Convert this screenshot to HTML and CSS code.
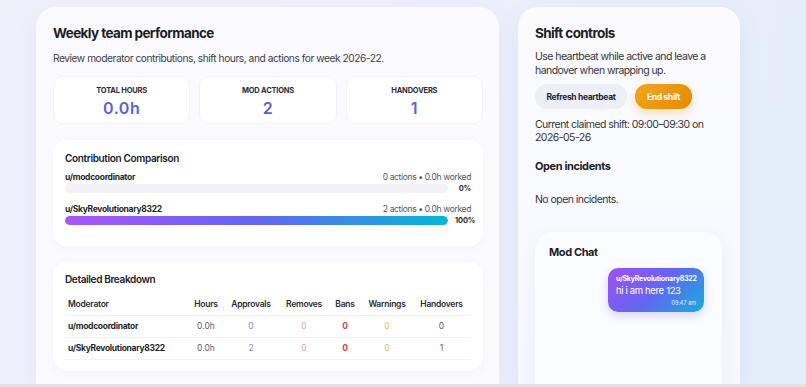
FILE: index.html
```html
<!DOCTYPE html>
<html lang="en">
<head>
    <meta charset="UTF-8">
    <meta name="viewport" content="width=device-width, initial-scale=1.0">
    <title>Weekly team performance</title>
    <link rel="stylesheet" href="styles.css">
</head>
<body>
    <div class="page">
        <div class="panel main-panel">
            <h1>Weekly team performance</h1>
            <p class="subtitle">Review moderator contributions, shift hours, and actions for week 2026-22.</p>

            <div class="stats">
                <div class="stat">
                    <div class="stat-label">TOTAL HOURS</div>
                    <div class="stat-value">0.0h</div>
                </div>
                <div class="stat">
                    <div class="stat-label">MOD ACTIONS</div>
                    <div class="stat-value">2</div>
                </div>
                <div class="stat">
                    <div class="stat-label">HANDOVERS</div>
                    <div class="stat-value">1</div>
                </div>
            </div>

            <div class="card compare">
                <h2>Contribution Comparison</h2>
                <div class="compare-row">
                    <div class="compare-head">
                        <span class="mod-name">u/modcoordinator</span>
                        <span class="compare-meta">0 actions • 0.0h worked</span>
                    </div>
                    <div class="bar-line">
                        <div class="bar-track"><div class="bar-fill" style="width: 0%"></div></div>
                        <span class="bar-pct">0%</span>
                    </div>
                </div>
                <div class="compare-row">
                    <div class="compare-head">
                        <span class="mod-name">u/SkyRevolutionary8322</span>
                        <span class="compare-meta">2 actions • 0.0h worked</span>
                    </div>
                    <div class="bar-line">
                        <div class="bar-track"><div class="bar-fill" style="width: 100%"></div></div>
                        <span class="bar-pct">100%</span>
                    </div>
                </div>
            </div>

            <div class="card breakdown">
                <h2>Detailed Breakdown</h2>
                <table>
                    <colgroup>
                        <col class="c-mod">
                        <col class="c-hours">
                        <col class="c-appr">
                        <col class="c-rem">
                        <col class="c-bans">
                        <col class="c-warn">
                        <col class="c-hand">
                    </colgroup>
                    <thead>
                        <tr>
                            <th class="left">Moderator</th>
                            <th>Hours</th>
                            <th>Approvals</th>
                            <th>Removes</th>
                            <th>Bans</th>
                            <th>Warnings</th>
                            <th>Handovers</th>
                        </tr>
                    </thead>
                    <tbody>
                        <tr>
                            <td class="left mod-name">u/modcoordinator</td>
                            <td class="muted">0.0h</td>
                            <td class="appr">0</td>
                            <td class="rem">0</td>
                            <td class="bans">0</td>
                            <td class="warn">0</td>
                            <td class="muted">0</td>
                        </tr>
                        <tr>
                            <td class="left mod-name">u/SkyRevolutionary8322</td>
                            <td class="muted">0.0h</td>
                            <td class="appr">2</td>
                            <td class="rem">0</td>
                            <td class="bans">0</td>
                            <td class="warn">0</td>
                            <td class="muted">1</td>
                        </tr>
                    </tbody>
                </table>
            </div>
        </div>

        <div class="panel side-panel">
            <h1>Shift controls</h1>
            <p class="side-text">Use heartbeat while active and leave a handover when wrapping up.</p>
            <div class="actions">
                <button class="btn btn-soft">Refresh heartbeat</button>
                <button class="btn btn-orange">End shift</button>
            </div>
            <p class="side-text claimed">Current claimed shift: 09:00–09:30 on 2026-05-26</p>

            <h3>Open incidents</h3>
            <p class="side-text empty">No open incidents.</p>

            <div class="chat">
                <h3>Mod Chat</h3>
                <div class="bubble">
                    <div class="bubble-user">u/SkyRevolutionary8322</div>
                    <div class="bubble-text">hi i am here 123</div>
                    <div class="bubble-time">09:47 am</div>
                </div>
            </div>
        </div>
    </div>
    <div class="bottom-edge"></div>
</body>
</html>
```

FILE: styles.css
```css
* {
    box-sizing: border-box;
}
body {
    margin: 0;
    height: 387px;
    overflow: hidden;
    font-family: Inter, "Noto Sans", sans-serif;
    color: #1d1d24;
    background: linear-gradient(100deg, #f0f0fb 0%, #eeeffb 55%, #e2edf9 100%);
}
.page {
    display: flex;
    gap: 19px;
    height: 384px;
    padding: 7px 0 0 36px;
    overflow: hidden;
}
.panel {
    border-radius: 20px 20px 0 0;
    box-shadow: 0 6px 24px rgba(120, 120, 200, 0.08);
}
.main-panel {
    width: 463px;
    padding: 16px 16px 0 17px;
    background: #f9f9fe;
}
.side-panel {
    width: 222px;
    padding: 16px 18px 0 17px;
    background: linear-gradient(180deg, #fbfbfe 0%, #f5f8fd 100%);
}
h1 {
    margin: 0;
    font-size: 13.5px;
    line-height: 20px;
    font-weight: 700;
    letter-spacing: -0.6px;
}
.subtitle {
    margin: 8px 0 0;
    font-size: 10.2px;
    line-height: 14px;
    color: #3e3e48;
    letter-spacing: -0.45px;
}
.stats {
    display: flex;
    gap: 9px;
    margin-top: 11px;
}
.stat {
    flex: 1;
    height: 48px;
    padding-top: 9px;
    text-align: center;
    background: #fff;
    border: 1px solid #f1f1f7;
    border-radius: 10px;
}
.stat-label {
    font-size: 7.5px;
    line-height: 10px;
    font-weight: 700;
    color: #2c2c34;
    letter-spacing: -0.2px;
}
.stat-value {
    margin-top: 2px;
    font-size: 16px;
    line-height: 20px;
    font-weight: 600;
    color: #5d5fd9;
    letter-spacing: 0.5px;
}
.card {
    background: #fff;
    border-radius: 14px;
    box-shadow: 0 2px 10px rgba(120, 120, 200, 0.05);
}
.compare {
    margin-top: 16px;
    height: 106px;
    padding: 11px 12px 0;
}
h2 {
    margin: 0;
    font-size: 10px;
    line-height: 14px;
    font-weight: 600;
    color: #202028;
    letter-spacing: -0.35px;
}
.compare-row {
    margin-top: 6px;
}
.compare-row + .compare-row {
    margin-top: 10px;
}
.compare-head {
    display: flex;
    justify-content: space-between;
    font-size: 8.5px;
    line-height: 12px;
}
.mod-name {
    font-weight: 700;
    color: #1f1f27;
    letter-spacing: -0.3px;
}
.compare-meta {
    color: #55555f;
    letter-spacing: -0.35px;
}
.bar-line {
    display: flex;
    align-items: center;
    gap: 7px;
    height: 9px;
    margin-top: 1px;
}
.bar-track {
    flex: 1;
    height: 9px;
    border-radius: 5px;
    background: #f1f1f8;
    overflow: hidden;
}
.bar-fill {
    height: 100%;
    border-radius: 5px;
    background: linear-gradient(90deg, #a855f7 0%, #6366f1 50%, #06b6d4 100%);
}
.bar-pct {
    width: 16px;
    font-size: 7.5px;
    line-height: 9px;
    font-weight: 700;
    text-align: right;
    color: #2a2a33;
    letter-spacing: -0.2px;
}
.breakdown {
    margin-top: 16px;
    height: 109px;
    padding: 10px 12px 0;
}
table {
    width: 100%;
    margin-top: 7px;
    border-collapse: collapse;
    table-layout: fixed;
    font-size: 8.5px;
}
.c-mod { width: 125px; }
.c-hours { width: 32px; }
.c-appr { width: 58px; }
.c-rem { width: 48px; }
.c-bans { width: 34px; }
.c-warn { width: 50px; }
th, td {
    height: 22px;
    padding: 0;
    text-align: center;
    border-bottom: 1px solid #f1f1f6;
}
th {
    font-weight: 600;
    color: #2a2a33;
    letter-spacing: -0.25px;
}
.left {
    text-align: left;
    padding-left: 3px;
}
.muted { color: #60606a; }
.appr { color: #8d84e6; }
.rem { color: #f19a9a; }
.bans { color: #e23b3b; font-weight: 700; }
.warn { color: #f1b35c; }
.side-text {
    margin: 7px 0 0;
    font-size: 10.5px;
    line-height: 14px;
    color: #34343d;
    letter-spacing: -0.55px;
}
.actions {
    display: flex;
    gap: 8px;
    margin-top: 6px;
}
.btn {
    height: 25px;
    padding: 0;
    border: none;
    border-radius: 12px;
    font-family: inherit;
    font-size: 8.5px;
    font-weight: 700;
    letter-spacing: -0.35px;
    white-space: nowrap;
    cursor: pointer;
}
.btn-soft {
    width: 92px;
    background: #eeeef9;
    color: #24242c;
}
.btn-orange {
    width: 57px;
    background: linear-gradient(135deg, #f3a524 0%, #e38a06 100%);
    color: #fff;
    box-shadow: 0 4px 10px rgba(240, 150, 20, 0.3);
}
.claimed {
    margin-top: 9px;
    line-height: 13px;
}
h3 {
    margin: 14px 0 0;
    font-size: 11px;
    line-height: 16px;
    font-weight: 700;
    color: #1d1d24;
    letter-spacing: -0.4px;
}
.empty {
    margin-top: 19px;
}
.chat {
    height: 200px;
    margin-top: 25px;
    padding: 12px 18px 0 14px;
    border-radius: 18px 18px 0 0;
    background: #fbfcff;
    box-shadow: 0 4px 16px rgba(120, 130, 200, 0.07);
}
.chat h3 {
    margin: 0;
}
.bubble {
    width: 96px;
    margin: 8px 0 0 auto;
    padding: 6px 8px 5px;
    border-radius: 10px;
    color: #fff;
    background: linear-gradient(135deg, #a04ff3 0%, #6366f1 50%, #16aed8 100%);
    box-shadow: 0 4px 10px rgba(110, 100, 230, 0.25);
}
.bubble-user {
    font-size: 7px;
    line-height: 10px;
    font-weight: 700;
    letter-spacing: -0.2px;
}
.bubble-text {
    margin-top: 1px;
    font-size: 9.5px;
    line-height: 12px;
    letter-spacing: -0.35px;
}
.bubble-time {
    margin-top: 2px;
    font-size: 5.5px;
    line-height: 8px;
    text-align: right;
    opacity: 0.85;
}
.bottom-edge {
    height: 3px;
    background: #e2e2e6;
}
```
